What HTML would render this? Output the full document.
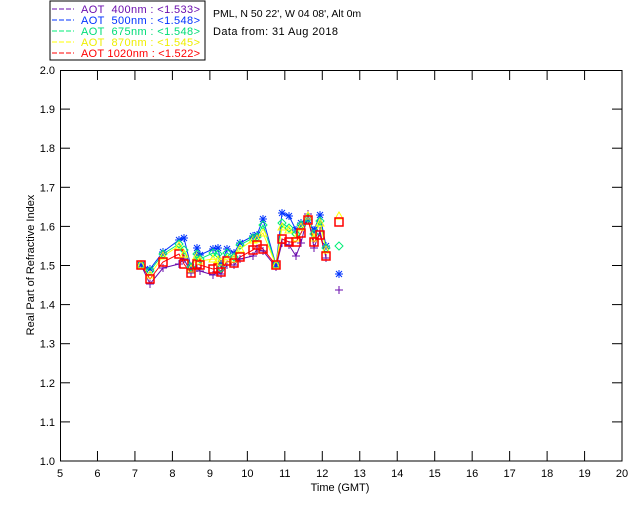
<!DOCTYPE html>
<html><head><meta charset="utf-8"><style>
html,body{margin:0;padding:0;background:#fff;width:640px;height:512px;overflow:hidden}
svg{display:block;font-family:"Liberation Sans",sans-serif}
text{white-space:pre}
</style></head><body>
<svg id="s" width="640" height="512" xmlns="http://www.w3.org/2000/svg">
<rect x="50" y="1" width="155" height="59" fill="none" stroke="#000" stroke-width="1"/>
<g font-size="11">
<line x1="52" y1="9" x2="74" y2="9" stroke="#6a0dad" stroke-dasharray="5,2"/><text x="81" y="13" fill="#6a0dad" textLength="119" lengthAdjust="spacing">AOT  400nm : &lt;1.533&gt;</text>
<line x1="52" y1="20" x2="74" y2="20" stroke="#0033ff" stroke-dasharray="5,2"/><text x="81" y="24" fill="#0033ff" textLength="119" lengthAdjust="spacing">AOT  500nm : &lt;1.548&gt;</text>
<line x1="52" y1="31" x2="74" y2="31" stroke="#00ee77" stroke-dasharray="5,2"/><text x="81" y="35" fill="#00dd77" textLength="119" lengthAdjust="spacing">AOT  675nm : &lt;1.548&gt;</text>
<line x1="52" y1="42" x2="74" y2="42" stroke="#ffff00" stroke-dasharray="5,2"/><text x="81" y="46" fill="#eeee00" textLength="119" lengthAdjust="spacing">AOT  870nm : &lt;1.545&gt;</text>
<line x1="52" y1="53" x2="74" y2="53" stroke="#ff0000" stroke-dasharray="5,2"/><text x="81" y="57" fill="#ff0000" textLength="119" lengthAdjust="spacing">AOT 1020nm : &lt;1.522&gt;</text>
<text x="213" y="17" fill="#000" font-size="10.5">PML, N 50 22', W 04 08', Alt 0m</text>
<text x="213" y="35" fill="#000" textLength="125" lengthAdjust="spacing">Data from: 31 Aug 2018</text>
</g>
<rect x="60.5" y="70.5" width="561.5" height="390.5" fill="none" stroke="#000"/>
<g id="ax" stroke="#000"></g>
<g id="lb" font-size="11" fill="#000"></g>
<text x="340" y="491" font-size="11" text-anchor="middle">Time (GMT)</text>
<text transform="translate(34,265) rotate(-90)" font-size="11" text-anchor="middle">Real Part of Refractive Index</text>
<g id="d"></g>
</svg>
<script>
var NS="http://www.w3.org/2000/svg";
function el(p,t,a,txt){var e=document.createElementNS(NS,t);for(var k in a)e.setAttribute(k,a[k]);if(txt)e.textContent=txt;document.getElementById(p).appendChild(e);return e;}
for(var i=0;i<=15;i++){var x=60+i*37.47;
 if(i>0&&i<15){el("ax","line",{x1:x,y1:461,x2:x,y2:451});el("ax","line",{x1:x,y1:70,x2:x,y2:80});}
 el("lb","text",{x:x,y:477,"text-anchor":"middle"},String(5+i));}
for(var j=0;j<=10;j++){var y=461-j*39.1;
 if(j>0&&j<10){el("ax","line",{x1:60,y1:y,x2:70,y2:y});el("ax","line",{x1:622,y1:y,x2:612,y2:y});}
 el("lb","text",{x:55,y:y+4,"text-anchor":"end"},(1+j/10).toFixed(1));}
var R=[[141,265],[150,279],[163,262],[179,254],[184,264],[191,273],[197,264],[200,265],[213,269],[218,268],[221,272],[227,261],[234,263],[240,257],[253,250],[257,245],[263,249],[276,265],[282,239],[289,242],[296,242],[301,233],[308,220],[314,242],[320,235],[326,256],[339,222]];
var off={p:[0,5,6,10,-5,0,4,6,6,4,2,4,2,2,6,4,2,2,4,3,14,10,-6,6,-4,2,68],
 b:[0,-10,-10,-14,-26,-6,-16,-10,-20,-20,-8,-12,-10,-14,-14,-10,-30,0,-26,-26,-12,-10,0,-12,-20,-10,52],
 g:[0,-8,-8,-10,-14,-6,-10,-6,-16,-14,-4,-8,-6,-12,-12,-8,-24,0,-16,-14,-8,-8,-2,-8,-14,-8,24],
 y:[0,-4,-6,-8,-10,-4,-8,-4,-10,-8,-10,-2,-4,-8,-10,-6,-16,0,-12,-12,-4,-6,-4,-4,-12,-6,-6]};
function line(col,dy){var pts=[];for(var i=0;i<R.length-1;i++){pts.push(R[i][0]+","+(R[i][1]+dy[i]));}
 el("d","polyline",{points:pts.join(" "),fill:"none",stroke:col,"stroke-width":1});}
line("#6a0dad",off.p);line("#0033ff",off.b);line("#00ee77",off.g);line("#ffff00",off.y);line("#ff0000",R.map(function(){return 0}));
for(var i=0;i<R.length;i++){var x=R[i][0],y=R[i][1];
 var py=y+off.p[i];el("d","path",{d:"M"+(x-4)+" "+py+"h8M"+x+" "+(py-4)+"v8",stroke:"#6a0dad",fill:"none"});
 var by=y+off.b[i];el("d","path",{d:"M"+(x-4)+" "+by+"h8M"+x+" "+(by-4)+"v8M"+(x-3)+" "+(by-3)+"l6 6M"+(x+3)+" "+(by-3)+"l-6 6",stroke:"#0033ff",fill:"none"});
 var gy=y+off.g[i];el("d","path",{d:"M"+x+" "+(gy-4)+"l4 4l-4 4l-4 -4z",stroke:"#00ee77",fill:"none"});
 var yy=y+off.y[i];el("d","path",{d:"M"+x+" "+(yy-4)+"l4 7h-8z",stroke:"#ffff00",fill:"none"});
 el("d","rect",{x:x-4,y:y-4,width:8,height:8,stroke:"#ff0000",fill:"none","stroke-width":1.5});}
</script>
</body></html>
